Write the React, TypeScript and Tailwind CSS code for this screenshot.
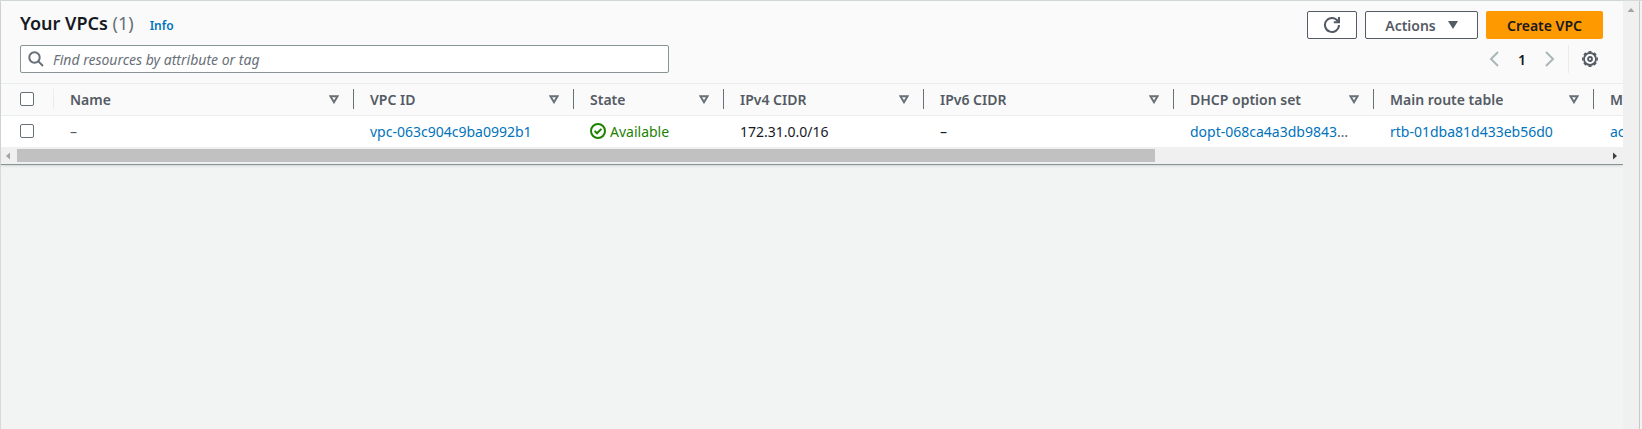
import React from 'react';

type Column = { label: string; width: string };

const columns: Column[] = [
  { label: 'Name', width: 'w-[300px]' },
  { label: 'VPC ID', width: 'w-[220px]' },
  { label: 'State', width: 'w-[150px]' },
  { label: 'IPv4 CIDR', width: 'w-[200px]' },
  { label: 'IPv6 CIDR', width: 'w-[250px]' },
  { label: 'DHCP option set', width: 'w-[200px]' },
  { label: 'Main route table', width: 'w-[220px]' },
  { label: 'Main network ACL', width: 'w-[220px]' },
];

function SortIcon() {
  return (
    <svg viewBox="0 0 10 9" className="h-[9px] w-[10px] shrink-0" fill="none" stroke="#687078" strokeWidth="2" aria-hidden="true">
      <path d="M1.4 1.2h7.2L5 7.2z" />
    </svg>
  );
}

function Checkbox({ label }: { label: string }) {
  return (
    <input
      type="checkbox"
      aria-label={label}
      className="block size-[14px] appearance-none rounded-[2px] border border-[#687078] bg-white checked:bg-[#0073bb]"
    />
  );
}

function CellLink({ children }: { children: React.ReactNode }) {
  return (
    <a href="#" className="text-[#0073bb] hover:underline">
      {children}
    </a>
  );
}

function GearIcon() {
  return (
    <svg viewBox="0 0 16 16" className="size-4" fill="none" stroke="#545b64" aria-hidden="true">
      <circle cx="8" cy="8" r="6" strokeWidth="1.8" />
      <circle cx="8" cy="8" r="7.2" strokeWidth="1.5" pathLength="16" strokeDasharray="1.1 0.9" strokeDashoffset="0.55" />
      <circle cx="8" cy="8" r="2" strokeWidth="1.8" />
    </svg>
  );
}

function Header() {
  return (
    <header className="flex flex-col gap-[6px] border-b border-[#eaeded] bg-[#fafafa] pt-[10px] pr-5 pb-[10px] pl-[19px]">
      <div className="flex items-center justify-between">
        <div className="flex items-baseline gap-4 pb-1">
          <h1 className="text-[18px] leading-6 font-semibold text-[#16191f]">
            Your VPCs <span className="font-normal text-[#687078]">(1)</span>
          </h1>
          <a href="#" className="text-[12px] font-semibold text-[#0073bb]">
            Info
          </a>
        </div>
        <div className="flex gap-2">
          <button aria-label="Refresh" className="flex h-7 w-[50px] items-center justify-center rounded-[2px] border border-[#545b64] bg-white">
            <svg viewBox="0 0 16 16" className="size-4" fill="none" stroke="#545b64" strokeWidth="2" aria-hidden="true">
              <path d="M15 8A7 7 0 1 1 13.4 3.5L15 5.2" />
              <path d="M15 0v5.2H9.8" />
            </svg>
          </button>
          <button className="flex h-7 w-[113px] items-center justify-center gap-3 rounded-[2px] border border-[#545b64] bg-white text-[14px] font-semibold text-[#545b64]">
            Actions
            <svg viewBox="0 0 10 8" className="h-2 w-[10px]" fill="#545b64" aria-hidden="true">
              <path d="M0 0h10L5 8z" />
            </svg>
          </button>
          <button className="h-7 w-[117px] rounded-[2px] bg-[#ff9900] text-[14px] font-semibold text-[#16191f]">Create VPC</button>
        </div>
      </div>
      <div className="flex items-center justify-between">
        <label className="flex h-7 w-[41%] items-center gap-[9px] rounded-[2px] border border-[#879596] bg-white px-[7px]">
          <svg viewBox="0 0 16 16" className="size-4 shrink-0" fill="none" stroke="#687078" strokeWidth="2" aria-hidden="true">
            <circle cx="6.5" cy="6.5" r="5.2" />
            <path d="M10.4 10.4l4.6 4.6" />
          </svg>
          <input
            type="text"
            aria-label="Find resources"
            placeholder="Find resources by attribute or tag"
            className="min-w-0 flex-1 bg-transparent text-[14px] text-[#16191f] outline-none placeholder:text-[#687078] placeholder:italic"
          />
        </label>
        <div className="flex items-center">
          <button aria-label="Previous page" className="flex size-4 items-center justify-center">
            <svg viewBox="0 0 10 16" className="h-4 w-[10px]" fill="none" stroke="#aab7b8" strokeWidth="2" aria-hidden="true">
              <path d="M9 1L2 8l7 7" />
            </svg>
          </button>
          <button aria-current="page" className="w-10 text-[14px] font-semibold text-[#16191f]">
            1
          </button>
          <button aria-label="Next page" className="flex size-4 items-center justify-center">
            <svg viewBox="0 0 10 16" className="h-4 w-[10px]" fill="none" stroke="#aab7b8" strokeWidth="2" aria-hidden="true">
              <path d="M1 1l7 7-7 7" />
            </svg>
          </button>
          <button aria-label="Preferences" className="ml-[10px] flex h-7 items-center border-l border-[#eaeded] pr-[5px] pl-[13px]">
            <GearIcon />
          </button>
        </div>
      </div>
    </header>
  );
}

const cell = 'truncate py-0 pr-6 pl-4';

function VpcTable() {
  return (
    <div className="overflow-hidden bg-white">
      <table className="w-[1813px] table-fixed border-collapse text-left text-[14px] text-[#545b64]">
        <thead>
          <tr className="h-[31px] border-b border-[#eaeded] bg-[#fafafa]">
            <th className="w-[53px] p-0 font-semibold">
              <div className="flex h-5 items-center border-r border-[#eaeded] pl-[19px]">
                <Checkbox label="Select all VPCs" />
              </div>
            </th>
            {columns.map((c) => (
              <th key={c.label} className={`${c.width} p-0 font-semibold`}>
                <div className="flex h-5 items-center justify-between border-r border-[#687078] pr-[14px] pl-4">
                  <span className="truncate">{c.label}</span>
                  <SortIcon />
                </div>
              </th>
            ))}
          </tr>
        </thead>
        <tbody>
          <tr className="h-8">
            <td className="p-0 pl-[19px]">
              <Checkbox label="Select VPC" />
            </td>
            <td className={cell}>–</td>
            <td className={cell}>
              <CellLink>vpc-063c904c9ba0992b1</CellLink>
            </td>
            <td className={cell}>
              <span className="flex items-center gap-1 text-[#1d8102]">
                <svg viewBox="0 0 16 16" className="size-4 shrink-0" fill="none" stroke="currentColor" strokeWidth="2" aria-hidden="true">
                  <circle cx="8" cy="8" r="7" />
                  <path d="M4.600 7.900l2.400 2.400 4.400-4.400" />
                </svg>
                Available
              </span>
            </td>
            <td className={`${cell} text-[#16191f]`}>172.31.0.0/16</td>
            <td className={`${cell} text-[#16191f]`}>–</td>
            <td className={cell}>
              <CellLink>dopt-068ca4a3db98437c1</CellLink>
            </td>
            <td className={cell}>
              <CellLink>rtb-01dba81d433eb56d0</CellLink>
            </td>
            <td className={cell}>
              <CellLink>acl-0b71c5f2</CellLink>
            </td>
          </tr>
        </tbody>
      </table>
    </div>
  );
}

function HorizontalScrollbar() {
  return (
    <div className="flex h-[17px] items-center bg-[#f0f0f0]" aria-hidden="true">
      <svg viewBox="0 0 16 16" className="size-4 shrink-0" fill="#a3a3a3">
        <path d="M9 4.500v7L5 8z" />
      </svg>
      <div className="flex-1">
        <div className="h-[13px] w-[71.6%] bg-[#c1c1c1]" />
      </div>
      <svg viewBox="0 0 16 16" className="size-4 shrink-0" fill="#404040">
        <path d="M6 4.500v7L10 8z" />
      </svg>
    </div>
  );
}

export default function App() {
  return (
    <div className="flex min-h-screen border-t border-l border-[#d5dbdb] bg-[#f2f3f3] font-['Noto_Sans',sans-serif]">
      <main className="min-w-0 flex-1">
        <section className="border-b border-[#879596] shadow-sm">
          <Header />
          <VpcTable />
          <HorizontalScrollbar />
        </section>
      </main>
      <div className="w-[17px] shrink-0 border-r border-[#c8c8c8] bg-[#f0f0f0]" aria-hidden="true">
        <svg viewBox="0 0 16 16" className="size-4" fill="#a3a3a3">
          <path d="M4.500 11h7L8 7z" />
        </svg>
      </div>
      <div className="w-[2px] shrink-0 bg-[#f2f3f3]" />
    </div>
  );
}
